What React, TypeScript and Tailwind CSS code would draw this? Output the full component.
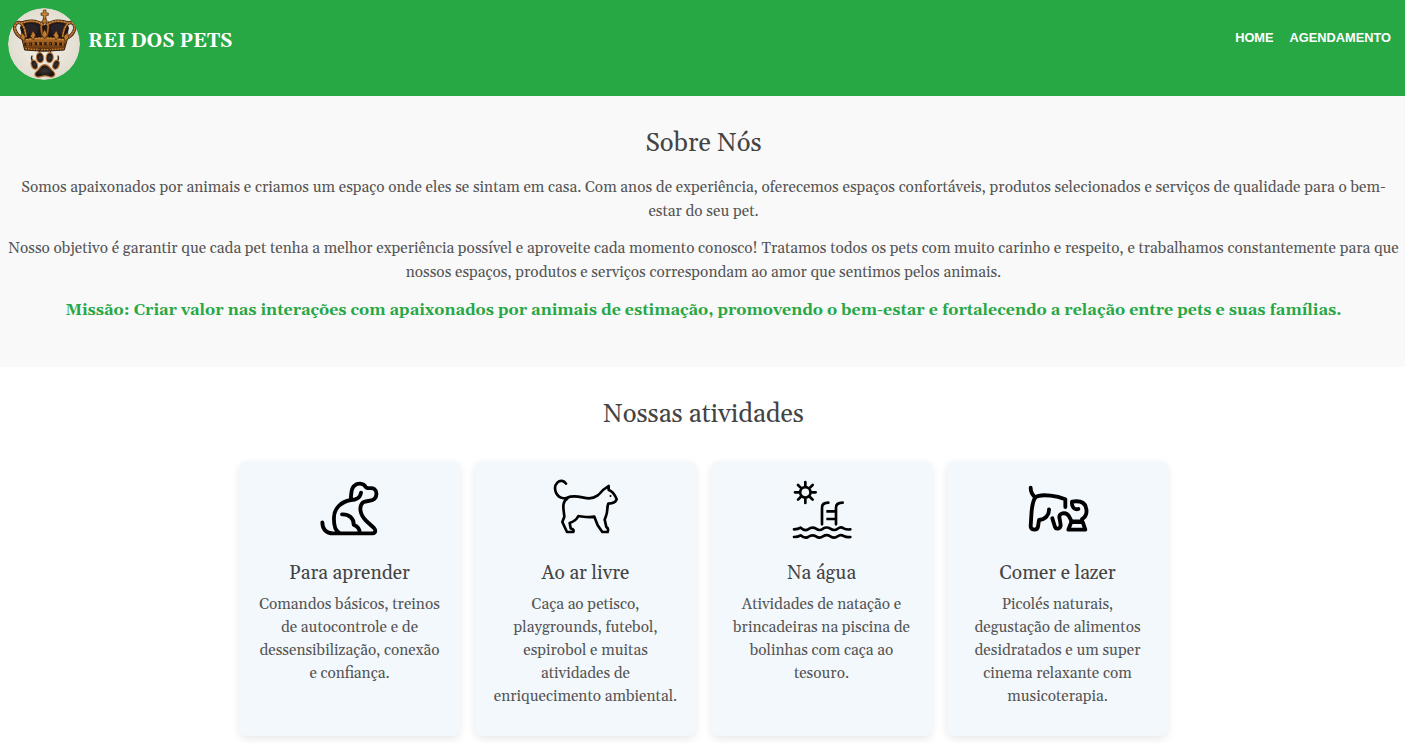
import type { ReactNode } from 'react';

function Logo() {
  return (
    <svg viewBox="24 24 216 216" className="h-[72px] w-[72px] shrink-0 rounded-full" aria-hidden="true">
      <defs>
        <linearGradient id="gold" x1="0" y1="0" x2="0" y2="1">
          <stop offset="0" stopColor="#b9752c" />
          <stop offset="0.5" stopColor="#8f5219" />
          <stop offset="1" stopColor="#4c270c" />
        </linearGradient>
        <radialGradient id="paper">
          <stop offset="0" stopColor="#f3f0e8" />
          <stop offset="1" stopColor="#e2ddd0" />
        </radialGradient>
        <radialGradient id="pad">
          <stop offset="0" stopColor="#3b3533" />
          <stop offset="1" stopColor="#171211" />
        </radialGradient>
      </defs>
      <circle cx="132" cy="132" r="108" fill="url(#paper)" />
      <path d="M60 84C64 62 102 58 132 76C162 58 202 62 207 84L198 120Q134 100 71 120Z" fill="#1d1719" />
      <path d="M70 78Q94 62 116 79L111 99Q91 96 79 106Z" fill="#292329" />
      <path d="M151 78Q174 63 196 78L187 105Q172 96 156 99Z" fill="#292329" />
      <g fill="none" stroke="#3e210d" strokeWidth="10">
        <path d="M72 117C46 107 37 81 49 70C63 60 76 79 78 112" />
        <path d="M195 117C222 107 231 81 219 70C205 60 190 79 188 112" />
        <path d="M62 70Q104 54 130 76M140 76Q166 54 206 70" />
        <path d="M127 66C118 78 126 98 130 115M141 66C150 78 142 98 138 115" />
      </g>
      <g fill="none" stroke="#a9692a" strokeWidth="5">
        <path d="M72 117C46 107 37 81 49 70C63 60 76 79 78 112" />
        <path d="M195 117C222 107 231 81 219 70C205 60 190 79 188 112" />
        <path d="M62 70Q104 54 130 76M140 76Q166 54 206 70" />
        <path d="M127 66C118 78 126 98 130 115M141 66C150 78 142 98 138 115" />
      </g>
      <g fill="none" stroke="#e2a658" strokeWidth="3" strokeDasharray="3 6">
        <path d="M70 112C46 102 39 81 49 70C63 63 73 81 78 110" />
        <path d="M197 112C221 102 229 81 219 70C205 63 193 81 188 110" />
        <path d="M64 70Q104 54 129 75M141 75Q166 54 204 70" />
      </g>
      <path d="M66 118Q134 104 202 118L193 150Q134 158 74 150Z" fill="url(#gold)" stroke="#3b200c" strokeWidth="3" />
      <path d="M69 121Q134 107 199 121" fill="none" stroke="#d99a48" strokeWidth="3.5" strokeDasharray="6 3" />
      <path d="M76 146Q134 152 191 146" fill="none" stroke="#c28234" strokeWidth="4" strokeDasharray="5 3" />
      <path d="M73 133Q134 129 195 133" fill="none" stroke="#2d180d" strokeWidth="9" strokeDasharray="8 7" />
      <path d="M78 133Q134 129 190 133" fill="none" stroke="#d09043" strokeWidth="3" strokeDasharray="3 9" />
      <g fill="#bd7b2f" stroke="#452309" strokeWidth="2">
        <path d="M134 89L143 103L134 117L125 103Z" />
        <path d="M99 92L107 105L100 120L91 109Z" />
        <path d="M169 92L177 109L168 120L160 105Z" />
        <path d="M65 97L76 110L73 124L62 114Z" />
        <path d="M203 97L206 114L195 124L191 110Z" />
        <path d="M130 30H138V39H145V46H138V57H130V46H123V39H130Z" />
        <circle cx="134" cy="63" r="7" />
      </g>
      <path d="M134 31V56M127 42H142" stroke="#d18b38" strokeWidth="2.5" />
      <g fill="none" stroke="#382824" strokeWidth="4" strokeLinecap="round">
        <path d="M121 147Q117 152 119 161" />
        <path d="M149 149Q154 154 151 162" />
        <path d="M96 168Q92 175 98 184" />
        <path d="M174 168Q178 175 172 184" />
      </g>
      <g fill="url(#pad)" stroke="#b77336" strokeWidth="3.5">
        <ellipse cx="120" cy="173" rx="10.5" ry="15" transform="rotate(-7 120 173)" />
        <ellipse cx="149" cy="173" rx="10.5" ry="15" transform="rotate(7 149 173)" />
        <ellipse cx="103" cy="194" rx="9" ry="14" transform="rotate(-20 103 194)" />
        <ellipse cx="168" cy="194" rx="9" ry="14" transform="rotate(20 168 194)" />
        <path d="M134 194C148 194 151 207 160 214C171 225 158 235 148 230Q135 225 122 230C109 235 98 225 110 214C119 207 121 194 134 194Z" />
      </g>
    </svg>
  );
}

function Icon({ viewBox, width, children }: { viewBox: string; width: number; children: ReactNode }) {
  return (
    <svg
      viewBox={viewBox}
      className="h-16 w-16 overflow-visible"
      fill="none"
      stroke="#000"
      strokeWidth={width}
      strokeLinecap="round"
      strokeLinejoin="round"
      aria-hidden="true"
    >
      {children}
    </svg>
  );
}

const activities: { title: string; text: string; icon: ReactNode }[] = [
  {
    title: 'Para aprender',
    text: 'Comandos básicos, treinos de autocontrole e de dessensibilização, conexão e confiança.',
    icon: (
      <Icon viewBox="24 15 192 192" width={11.5}>
        <path d="M37 151C37 171 48 184 69 184H188C197 184 198 174 192 168L169 147C149 128 146 103 159 91C169 85 183 89 193 81C201 73 202 58 193 51C184 45 177 52 168 46C160 32 142 31 131 43C122 53 124 70 122 84C139 84 151 76 153 62" />
        <path d="M122 84C94 89 73 108 72 135C71 157 76 175 86 181" />
        <path d="M96 127C117 126 132 139 131 158C143 163 150 170 149 183" />
      </Icon>
    ),
  },
  {
    title: 'Ao ar livre',
    text: 'Caça ao petisco, playgrounds, futebol, espirobol e muitas atividades de enriquecimento ambiental.',
    icon: (
      <Icon viewBox="27 15 192 192" width={8}>
        <path d="M63 35C57 25 45 24 37 32C24 45 31 69 48 77C54 80 60 79 66 77C91 67 111 78 132 79C153 79 164 66 174 54L191 42V54C205 58 210 69 215 82C212 92 204 94 190 95C185 106 189 119 183 132L179 143L184 165C190 168 190 174 188 180H172L158 160L148 134C132 138 116 134 100 132C95 143 86 149 74 153L77 169C86 171 87 176 85 180H66L52 150L58 134C57 116 48 90 67 80" />
        <circle cx="196" cy="72" r="1.6" strokeWidth="3" fill="#000" />
      </Icon>
    ),
  },
  {
    title: 'Na água',
    text: 'Atividades de natação e brincadeiras na piscina de bolinhas com caça ao tesouro.',
    icon: (
      <Icon viewBox="24 15 192 192" width={8}>
        <circle cx="70" cy="61" r="15.5" />
        <path d="M70 30V42M70 80V93M39 61H51M89 61H101M48 39L56 47M84 75L92 83M92 39L84 47M56 75L48 83" />
        <path d="M120 157V107Q120 92 139 92M162 157V107Q162 92 182 92" />
        <path d="M133 118H160M133 141H160" strokeLinecap="butt" />
        <path d="M36 172Q48 172 56 167Q68 178 78 172Q91 163 102 170Q113 178 123 170Q134 163 145 170Q157 178 167 170Q176 163 185 169Q195 174 205 172" />
        <path d="M36 195Q48 195 56 190Q68 201 78 195Q91 186 102 193Q113 201 123 193Q134 186 145 193Q157 201 167 193Q176 186 185 192Q195 197 205 195" />
      </Icon>
    ),
  },
  {
    title: 'Comer e lazer',
    text: 'Picolés naturais, degustação de alimentos desidratados e um super cinema relaxante com musicoterapia.',
    icon: (
      <Icon viewBox="24 15 192 192" width={11.5}>
        <path d="M38 47C38 60 42 68 52 76C63 67 81 69 98 71C117 73 132 78 142 82V105" />
        <path d="M52 76C42 91 41 110 40 130L38 163C38 176 58 176 60 164L63 144C82 143 94 129 93 112" />
        <path d="M103 139L111 165C114 173 127 171 128 160L125 140C119 122 144 118 153 133L161 148H192V141C204 136 208 121 204 107C200 89 181 86 162 89C160 105 169 114 181 111" />
        <path d="M160 150H194L202 173H151Z" />
      </Icon>
    ),
  },
];

export default function App() {
  return (
    <div className="min-h-[743px] bg-white text-center font-['Gelasio','Georgia','Liberation_Serif',serif] text-[#555]">
      <header className="flex h-24 items-start justify-between bg-[#28a745] p-2 text-white">
        <div className="flex items-start gap-2">
          <Logo />
          <h1 className="mt-[22px] text-[19.2px] leading-[24px] font-bold">REI DOS PETS</h1>
        </div>
        <nav className="mt-5 mr-1.5 flex gap-4 font-['Liberation_Sans',Arial,sans-serif] text-[12.8px] leading-[19px] font-bold">
          <a href="#home">HOME</a>
          <a href="#agendamento">AGENDAMENTO</a>
        </nav>
      </header>

      <section className="h-[271px] bg-[#f9f9f9] pt-[33px] pr-1 pl-1.5 text-[15.36px] leading-6">
        <h2 className="mb-4 text-[25.6px] leading-[30.7px] text-[#444]">Sobre Nós</h2>
        <p className="mb-[12.8px]">
          Somos apaixonados por animais e criamos um espaço onde eles se sintam em casa. Com anos de experiência,
          oferecemos espaços confortáveis, produtos selecionados e serviços de qualidade para o bem-estar do seu pet.
        </p>
        <p className="mb-[13.5px]">
          Nosso objetivo é garantir que cada pet tenha a melhor experiência possível e aproveite cada momento conosco!
          Tratamos todos os pets com muito carinho e respeito, e trabalhamos constantemente para que nossos espaços,
          produtos e serviços correspondam ao amor que sentimos pelos animais.
        </p>
        <p className="text-base font-bold text-[#28a745]">
          Missão: Criar valor nas interações com apaixonados por animais de estimação, promovendo o bem-estar e
          fortalecendo a relação entre pets e suas famílias.
        </p>
      </section>

      <section className="pt-8 pl-[2px]">
        <h2 className="mb-[31px] text-[25.6px] leading-[31px] text-[#444]">Nossas atividades</h2>
        <div className="flex justify-center gap-[15px]">
          {activities.map((a) => (
            <article
              key={a.title}
              className="flex h-[275px] w-[221px] flex-col items-center rounded-lg bg-[#f3f8fc] px-[15.5px] py-4 shadow-[0_3px_8px_rgba(0,0,0,0.09)]"
            >
              {a.icon}
              <h3 className="mt-[21px] mb-2 text-[19.2px] leading-[23px] text-[#444]">{a.title}</h3>
              <p className="text-[15.36px] leading-[23px]">{a.text}</p>
            </article>
          ))}
        </div>
      </section>
    </div>
  );
}
